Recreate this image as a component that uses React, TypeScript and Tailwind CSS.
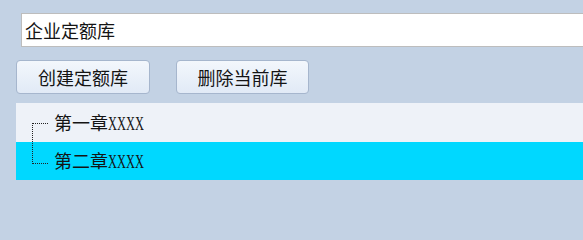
import React from "react";

const cjk = { fontFamily: '"Noto Sans CJK SC", "Noto Sans", sans-serif' };
const serif = { fontFamily: '"Liberation Serif", serif' };

function Label({ text }: { text: string }) {
  return (
    <span className="whitespace-nowrap">
      {text}
      <span className="inline-block scale-x-[0.69] origin-left text-[18px]" style={serif}>
        XXXX
      </span>
    </span>
  );
}

export default function App() {
  return (
    <div className="w-[583px] h-[240px] overflow-hidden bg-[#c3d2e4] text-[#141414]" style={cjk}>
      <div className="pt-[13px] pl-[21px]">
        <div className="w-[600px] h-[34px] bg-white border border-[#bdbdbd] flex items-center pl-[3px] text-[18px] leading-none">
          企业定额库
        </div>
      </div>
      <div className="flex pl-[16px] mt-[13px] gap-[26px]">
        <button className="w-[134px] h-[34px] rounded-[4px] border border-[#a6b6cd] bg-gradient-to-b from-[#f3f7fc] to-[#e1eaf6] text-[18px] leading-none flex items-center justify-center">
          创建定额库
        </button>
        <button className="w-[133px] h-[34px] rounded-[4px] border border-[#a6b6cd] bg-gradient-to-b from-[#f3f7fc] to-[#e1eaf6] text-[18px] leading-none flex items-center justify-center">
          删除当前库
        </button>
      </div>
      <div className="relative ml-[16px] mt-[9px] w-[600px]">
        <div className="h-[39px] bg-[#eef2f8] flex items-center pl-[38px] text-[18px] leading-none">
          <Label text="第一章" />
        </div>
        <div className="h-[38px] bg-[#00d8ff] flex items-center pl-[38px] text-[18px] leading-none">
          <Label text="第二章" />
        </div>
        <svg className="absolute left-0 top-0" width="40" height="77">
          <path d="M17 20.5 H33 M16.5 20 V61 M17 60.5 H33" stroke="#222" strokeWidth="1" strokeDasharray="1 1" fill="none" />
        </svg>
      </div>
    </div>
  );
}
